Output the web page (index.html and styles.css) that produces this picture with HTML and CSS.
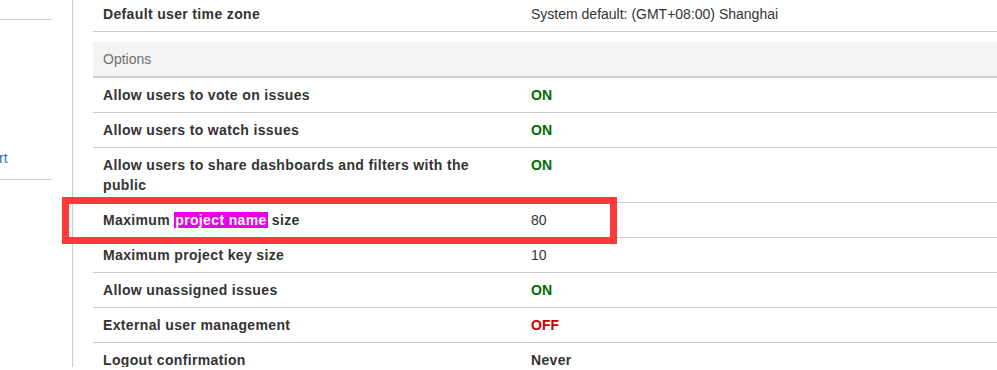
FILE: index.html
```html
<!DOCTYPE html>
<html lang="en">
<head>
    <meta charset="UTF-8">
    <title>General configuration</title>
    <link rel="stylesheet" href="styles.css">
</head>
<body>
    <div class="page">
        <!-- admin side navigation -->
        <aside class="sidebar">
            <ul class="nav-group nav-first">
                <li></li>
            </ul>
            <ul class="nav-group nav-second">
                <li><a href="#">Import</a></li>
            </ul>
            <ul class="nav-group nav-third">
                <li></li>
            </ul>
        </aside>

        <!-- settings table -->
        <main class="content">
            <table class="settings">
                <tr>
                    <th>Default user time zone</th>
                    <td>System default: (GMT+08:00) Shanghai</td>
                </tr>
            </table>

            <table class="settings">
                <tr class="group-head">
                    <td colspan="2">Options</td>
                </tr>
                <tr>
                    <th>Allow users to vote on issues</th>
                    <td><span class="status-on">ON</span></td>
                </tr>
                <tr>
                    <th>Allow users to watch issues</th>
                    <td><span class="status-on">ON</span></td>
                </tr>
                <tr>
                    <th>Allow users to share dashboards and filters with the public</th>
                    <td><span class="status-on">ON</span></td>
                </tr>
                <tr class="marked">
                    <th>Maximum <mark class="hit">project name</mark> size</th>
                    <td>80</td>
                </tr>
                <tr>
                    <th>Maximum project key size</th>
                    <td>10</td>
                </tr>
                <tr>
                    <th>Allow unassigned issues</th>
                    <td><span class="status-on">ON</span></td>
                </tr>
                <tr>
                    <th>External user management</th>
                    <td><span class="status-off">OFF</span></td>
                </tr>
                <tr>
                    <th>Logout confirmation</th>
                    <td><strong>Never</strong></td>
                </tr>
            </table>
        </main>
    </div>
</body>
</html>
```

FILE: styles.css
```css
/* base */
html, body {
    margin: 0;
    padding: 0;
    background: #fff;
    overflow: hidden;
}
body {
    font-family: "Liberation Sans", Arial, sans-serif;
    font-size: 14px;
    line-height: 20px;
    color: #333;
}

.page {
    display: flex;
    height: 370px;
    margin-top: -3px;
}

/* sidebar */
.sidebar {
    width: 72px;
    flex: none;
    border-right: 1px solid #ccc;
    overflow: hidden;
    height: 400px;
}
.nav-group {
    list-style: none;
    margin: 0 0 0 -42px;
    padding: 0 0 0 10px;
    width: 84px;
    border-bottom: 1px solid #ccc;
}
.nav-first {
    height: 22px;
}
.nav-second {
    height: 159px;
    display: flex;
    flex-direction: column;
    justify-content: flex-end;
}
.nav-second li {
    padding-bottom: 11px;
}
.nav-third {
    height: 189px;
}
.nav-group a {
    color: #3572b0;
    text-decoration: none;
}

/* content */
.content {
    flex: 1;
    margin-left: 20px;
    min-width: 0;
}
.settings {
    width: 100%;
    border-collapse: collapse;
    margin: 0 0 10px;
}
.settings th,
.settings td {
    padding: 7px 10px;
    border-bottom: 1px solid #ccc;
    text-align: left;
    vertical-align: top;
}
.settings th {
    width: 408px;
    font-weight: bold;
    letter-spacing: 0.35px;
}
.group-head td {
    background: #f4f4f4;
    color: #707070;
    border-bottom: 2px solid #ccc;
}

.status-on {
    color: #006b00;
    font-weight: bold;
}
.status-off {
    color: #d00000;
    font-weight: bold;
}
strong {
    letter-spacing: 0.35px;
}

/* search hit */
.hit {
    background: #e800e8;
    color: #fff;
    padding: 0 1px;
}

/* red annotation frame around the row */
.marked th {
    position: relative;
}
.marked th::before {
    content: "";
    position: absolute;
    left: -31px;
    top: -6px;
    width: 541px;
    height: 33px;
    border: 7px solid #fc3a3a;
    pointer-events: none;
}
```
